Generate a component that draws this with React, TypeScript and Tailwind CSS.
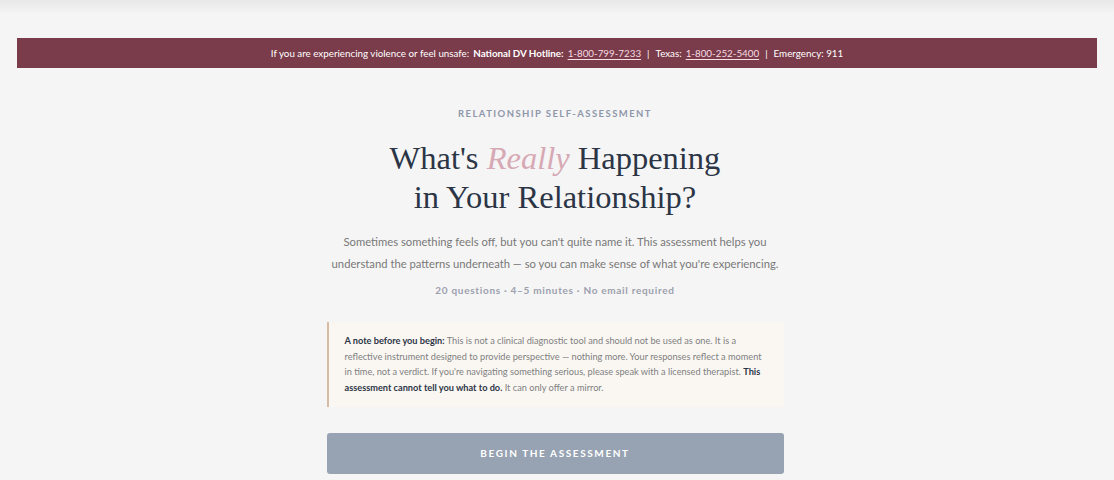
export default function App() {
  const sans = "font-['Lato','Noto_Sans',sans-serif]";
  return (
    <div className={`min-h-screen bg-[#f5f5f5] ${sans}`}>
      <div className="h-[14px] bg-gradient-to-b from-[#e8e8e8] to-[#f5f5f5]" />

      <div className="px-[17px] pt-[24px]">
        <div className="flex h-[30px] items-center justify-center bg-[#7a3b4b] text-[9.8px] text-white">
          <span>If you are experiencing violence or feel unsafe:</span>
          <b className="ml-[4px] font-bold">National DV Hotline:</b>
          <a className="ml-[4px] text-[#f7dde3] underline underline-offset-2" href="#">1-800-799-7233</a>
          <span className="mx-[6px]">|</span>
          <span>Texas:</span>
          <a className="ml-[4px] text-[#f7dde3] underline underline-offset-2" href="#">1-800-252-5400</a>
          <span className="mx-[6px]">|</span>
          <span>Emergency: 911</span>
        </div>
      </div>

      <div className="mx-auto w-[461px] pr-[4px]">
        <main className="flex w-[457px] flex-col items-center pt-[39px] text-center">
          <p className="text-[9.5px] font-bold uppercase leading-[14px] tracking-[0.15em] text-[#8f97ab]">
            Relationship Self-Assessment
          </p>

          <h1 className="mt-[18px] font-['Liberation_Serif',serif] text-[32.5px] leading-[39px] text-[#2c3546]">
            What's <em className="text-[#d6a9b4]">Really</em> Happening
            <br />
            in Your Relationship?
          </h1>

          <p className="mt-[14px] w-[480px] text-[11.25px] leading-[22px] text-[#787878]">
            Sometimes something feels off, but you can't quite name it. This assessment helps you
            <br />
            understand the patterns underneath — so you can make sense of what you're experiencing.
          </p>

          <p className="mt-[8px] text-[10px] font-bold leading-[14px] tracking-[0.07em] text-[#9ca0ad]">
            20 questions · 4–5 minutes · No email required
          </p>

          <div className="mt-[25px] w-full border-l-2 border-[#d6bca5] bg-[#faf7f3] py-[11px] pl-[16px] pr-[8px] text-left text-[9.2px] leading-[15.7px] text-[#808080]">
            <b className="font-bold text-[#2c3546]">A note before you begin:</b> This is not a clinical diagnostic
            tool and should not be used as one. It is a
            <br />
            reflective instrument designed to provide perspective — nothing more. Your responses reflect a moment
            <br />
            in time, not a verdict. If you're navigating something serious, please speak with a licensed therapist.{" "}
            <b className="font-bold text-[#2c3546]">This</b>
            <br />
            <b className="font-bold text-[#2c3546]">assessment cannot tell you what to do.</b> It can only offer a
            mirror.
          </div>

          <button
            type="button"
            className="mt-[26px] h-[41px] w-full rounded-[3px] bg-[#97a3b2] text-[10px] font-bold uppercase tracking-[0.16em] text-white"
          >
            Begin the Assessment
          </button>
        </main>
      </div>
    </div>
  );
}
